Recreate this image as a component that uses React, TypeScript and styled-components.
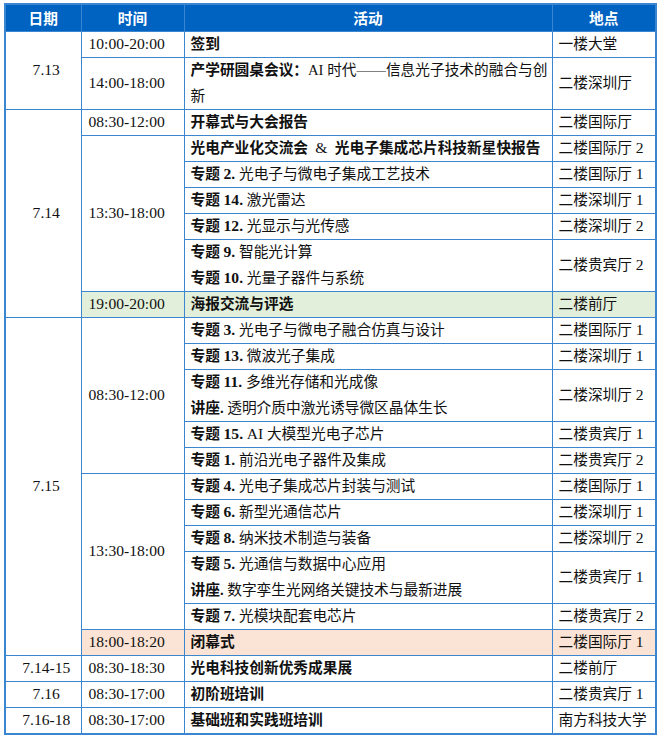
import React from 'react';
import styled, { createGlobalStyle } from 'styled-components';

const GlobalStyle = createGlobalStyle`
  html, body {
    margin: 0;
    padding: 0;
    background: #ffffff;
  }
  body {
    font-family: "Liberation Serif", "Noto Sans CJK SC", serif;
    color: #111111;
  }
`;

const LINE = '#3b86d1';
const GREEN = '#e2efda';
const PINK = '#fbe4d5';

const Page = styled.div`
  padding: 3px 0 0 4px;
`;

const Table = styled.table`
  width: 653px;
  table-layout: fixed;
  border-collapse: collapse;
  border: 2px solid ${LINE};
  font-size: 14.7px;
`;

const HeadCell = styled.th`
  height: 26px;
  padding: 0;
  background: #0062c1;
  color: #ffffff;
  font-family: "Noto Sans CJK SC", sans-serif;
  font-weight: 700;
  font-size: 14.7px;
  line-height: 20px;
  text-align: center;
  border: 1px solid ${LINE};
`;

const Row = styled.tr<{ $bg?: string }>`
  background: ${(p) => p.$bg || 'transparent'};
`;

const Cell = styled.td<{ $center?: boolean; $pad?: number }>`
  padding: 0 0 0 ${(p) => p.$pad ?? 6}px;
  height: 25px;
  line-height: 25px;
  text-align: ${(p) => (p.$center ? 'center' : 'left')};
  vertical-align: middle;
  border: 1px solid ${LINE};
  white-space: nowrap;
  overflow: hidden;
`;

const DateCell = styled(Cell)`
  background: #ffffff;
`;

const Num = styled.span`
  font-size: 15.6px;
  line-height: 1;
`;

const Line = styled.div<{ $wrap?: boolean }>`
  line-height: 25.5px;
  white-space: ${(p) => (p.$wrap ? 'normal' : 'nowrap')};
`;

const Strong = styled.b`
  font-weight: 700;
`;

const Topic = ({ n, children }: { n: string; children: React.ReactNode }) => (
  <>
    <Strong>
      专题 <Num>{n}.</Num>
    </Strong>{' '}
    {children}
  </>
);

const Lecture = ({ children }: { children: React.ReactNode }) => (
  <>
    <Strong>讲座.</Strong> {children}
  </>
);

const Time = ({ children, span }: { children: string; span?: number }) => (
  <Cell $pad={7} rowSpan={span}>
    <Num>{children}</Num>
  </Cell>
);

const Day = ({ children, span }: { children: string; span?: number }) => (
  <DateCell $center rowSpan={span}>
    <Num>{children}</Num>
  </DateCell>
);

const Place = ({ name, n }: { name: string; n?: string }) => (
  <Cell>
    {name}
    {n && (
      <>
        {' '}
        <Num>{n}</Num>
      </>
    )}
  </Cell>
);

export default function App() {
  return (
    <Page>
      <GlobalStyle />
      <Table>
        <colgroup>
          <col style={{ width: 76 }} />
          <col style={{ width: 103 }} />
          <col style={{ width: 368 }} />
          <col style={{ width: 104 }} />
        </colgroup>
        <thead>
          <tr>
            <HeadCell>日期</HeadCell>
            <HeadCell>时间</HeadCell>
            <HeadCell>活动</HeadCell>
            <HeadCell>地点</HeadCell>
          </tr>
        </thead>
        <tbody>
          <Row>
            <Day span={2}>7.13</Day>
            <Time>10:00-20:00</Time>
            <Cell><Strong>签到</Strong></Cell>
            <Place name="一楼大堂" />
          </Row>
          <Row>
            <Time>14:00-18:00</Time>
            <Cell>
              <Line $wrap>
                <Strong>产学研圆桌会议：</Strong>AI 时代——信息光子技术的融合与创新
              </Line>
            </Cell>
            <Place name="二楼深圳厅" />
          </Row>

          <Row>
            <Day span={7}>7.14</Day>
            <Time>08:30-12:00</Time>
            <Cell><Strong>开幕式与大会报告</Strong></Cell>
            <Place name="二楼国际厅" />
          </Row>
          <Row>
            <Time span={5}>13:30-18:00</Time>
            <Cell>
              <Strong>光电产业化交流会</Strong>&nbsp; <Num>&amp;</Num>&nbsp;{' '}
              <Strong>光电子集成芯片科技新星快报告</Strong>
            </Cell>
            <Place name="二楼国际厅" n="2" />
          </Row>
          <Row>
            <Cell><Topic n="2">光电子与微电子集成工艺技术</Topic></Cell>
            <Place name="二楼国际厅" n="1" />
          </Row>
          <Row>
            <Cell><Topic n="14">激光雷达</Topic></Cell>
            <Place name="二楼深圳厅" n="1" />
          </Row>
          <Row>
            <Cell><Topic n="12">光显示与光传感</Topic></Cell>
            <Place name="二楼深圳厅" n="2" />
          </Row>
          <Row>
            <Cell>
              <Line><Topic n="9">智能光计算</Topic></Line>
              <Line><Topic n="10">光量子器件与系统</Topic></Line>
            </Cell>
            <Place name="二楼贵宾厅" n="2" />
          </Row>
          <Row $bg={GREEN}>
            <Time>19:00-20:00</Time>
            <Cell><Strong>海报交流与评选</Strong></Cell>
            <Place name="二楼前厅" />
          </Row>

          <Row>
            <Day span={11}>7.15</Day>
            <Time span={5}>08:30-12:00</Time>
            <Cell><Topic n="3">光电子与微电子融合仿真与设计</Topic></Cell>
            <Place name="二楼国际厅" n="1" />
          </Row>
          <Row>
            <Cell><Topic n="13">微波光子集成</Topic></Cell>
            <Place name="二楼深圳厅" n="1" />
          </Row>
          <Row>
            <Cell>
              <Line><Topic n="11">多维光存储和光成像</Topic></Line>
              <Line><Lecture>透明介质中激光诱导微区晶体生长</Lecture></Line>
            </Cell>
            <Place name="二楼深圳厅" n="2" />
          </Row>
          <Row>
            <Cell>
              <Strong>
                专题 <Num>15.</Num>
              </Strong>{' '}
              <Num>AI</Num> 大模型光电子芯片
            </Cell>
            <Place name="二楼贵宾厅" n="1" />
          </Row>
          <Row>
            <Cell><Topic n="1">前沿光电子器件及集成</Topic></Cell>
            <Place name="二楼贵宾厅" n="2" />
          </Row>
          <Row>
            <Time span={5}>13:30-18:00</Time>
            <Cell><Topic n="4">光电子集成芯片封装与测试</Topic></Cell>
            <Place name="二楼国际厅" n="1" />
          </Row>
          <Row>
            <Cell><Topic n="6">新型光通信芯片</Topic></Cell>
            <Place name="二楼深圳厅" n="1" />
          </Row>
          <Row>
            <Cell><Topic n="8">纳米技术制造与装备</Topic></Cell>
            <Place name="二楼深圳厅" n="2" />
          </Row>
          <Row>
            <Cell>
              <Line><Topic n="5">光通信与数据中心应用</Topic></Line>
              <Line><Lecture>数字孪生光网络关键技术与最新进展</Lecture></Line>
            </Cell>
            <Place name="二楼贵宾厅" n="1" />
          </Row>
          <Row>
            <Cell><Topic n="7">光模块配套电芯片</Topic></Cell>
            <Place name="二楼贵宾厅" n="2" />
          </Row>
          <Row $bg={PINK}>
            <Time>18:00-18:20</Time>
            <Cell><Strong>闭幕式</Strong></Cell>
            <Place name="二楼国际厅" n="1" />
          </Row>

          <Row>
            <Day>7.14-15</Day>
            <Time>08:30-18:30</Time>
            <Cell><Strong>光电科技创新优秀成果展</Strong></Cell>
            <Place name="二楼前厅" />
          </Row>
          <Row>
            <Day>7.16</Day>
            <Time>08:30-17:00</Time>
            <Cell><Strong>初阶班培训</Strong></Cell>
            <Place name="二楼贵宾厅" n="1" />
          </Row>
          <Row>
            <Day>7.16-18</Day>
            <Time>08:30-17:00</Time>
            <Cell><Strong>基础班和实践班培训</Strong></Cell>
            <Place name="南方科技大学" />
          </Row>
        </tbody>
      </Table>
    </Page>
  );
}
